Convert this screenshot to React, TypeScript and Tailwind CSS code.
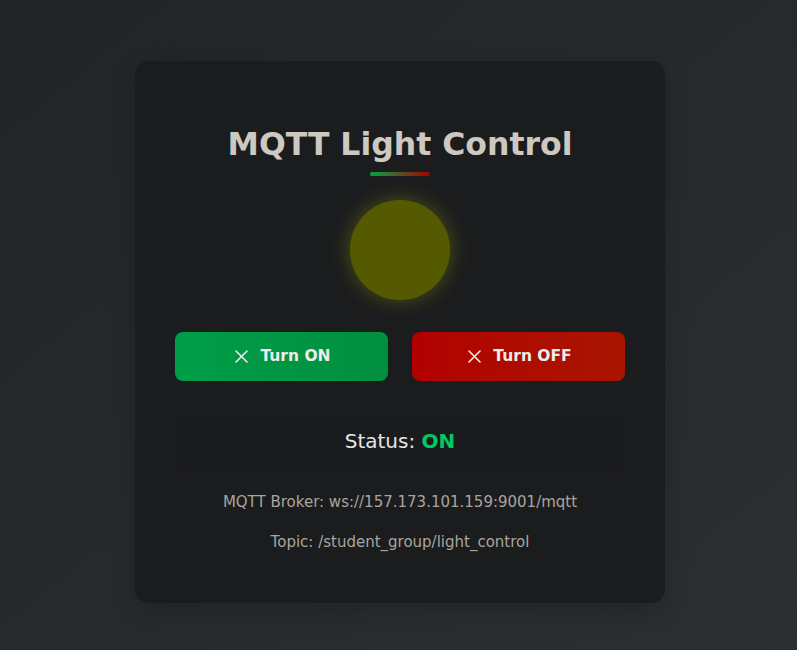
function CloseIcon() {
  return (
    <svg width="13" height="13" viewBox="0 0 13 13" fill="none" stroke="currentColor" strokeWidth="1.6" strokeLinecap="round">
      <path d="M1 1l11 11M12 1L1 12" />
    </svg>
  );
}

export default function App() {
  return (
    <div
      className="min-h-[650px] w-full flex items-start justify-center pt-[61px] pl-[3px] bg-gradient-to-br from-[#222528] to-[#2b2f32]"
      style={{ fontFamily: '"DejaVu Sans", sans-serif' }}
    >
      <div className="w-[530px] h-[542px] rounded-[14px] bg-[#1b1c1e] px-10 pt-[63px] flex flex-col items-center shadow-[0_8px_24px_rgba(0,0,0,0.18)]">
        {/* Heading */}
        <h1 className="text-[31.5px] font-bold leading-[40px] text-[#cdc8c0]">
          MQTT Light Control
        </h1>
        <div className="mt-[8px] w-[60px] h-[4px] rounded-full bg-[linear-gradient(90deg,#00a443,#a80000)]" />

        {/* Light bulb */}
        <div className="mt-[24px] w-[100px] h-[100px] rounded-full bg-[#555a00] shadow-[0_0_20px_rgba(180,190,0,0.35)]" />

        {/* Buttons */}
        <div className="mt-[32px] w-full grid grid-cols-2 gap-6">
          <button className="h-[49px] pl-[3px] rounded-lg flex items-center justify-center gap-3 text-[15.5px] font-bold text-[#ececec] bg-gradient-to-r from-[#009e48] to-[#008f3e]">
            <CloseIcon />
            Turn ON
          </button>
          <button className="h-[49px] pl-[3px] rounded-lg flex items-center justify-center gap-3 text-[15.5px] font-bold text-[#ececec] bg-gradient-to-r from-[#b20000] to-[#a81500]">
            <CloseIcon />
            Turn OFF
          </button>
        </div>

        {/* Status */}
        <div className="mt-[34px] w-full h-[52px] rounded-lg bg-[#1a1b1d] flex items-center justify-center text-[20px] text-[#e6e6e6]">
          Status:&nbsp;<span className="font-bold text-[#00c862]">ON</span>
        </div>

        <p className="mt-[24px] text-[15px] leading-[22px] text-[#a9a59d]">
          MQTT Broker: ws://157.173.101.159:9001/mqtt
        </p>
        <p className="mt-[18px] text-[15px] leading-[22px] text-[#a9a59d]">
          Topic: /student_group/light_control
        </p>
      </div>
    </div>
  );
}
